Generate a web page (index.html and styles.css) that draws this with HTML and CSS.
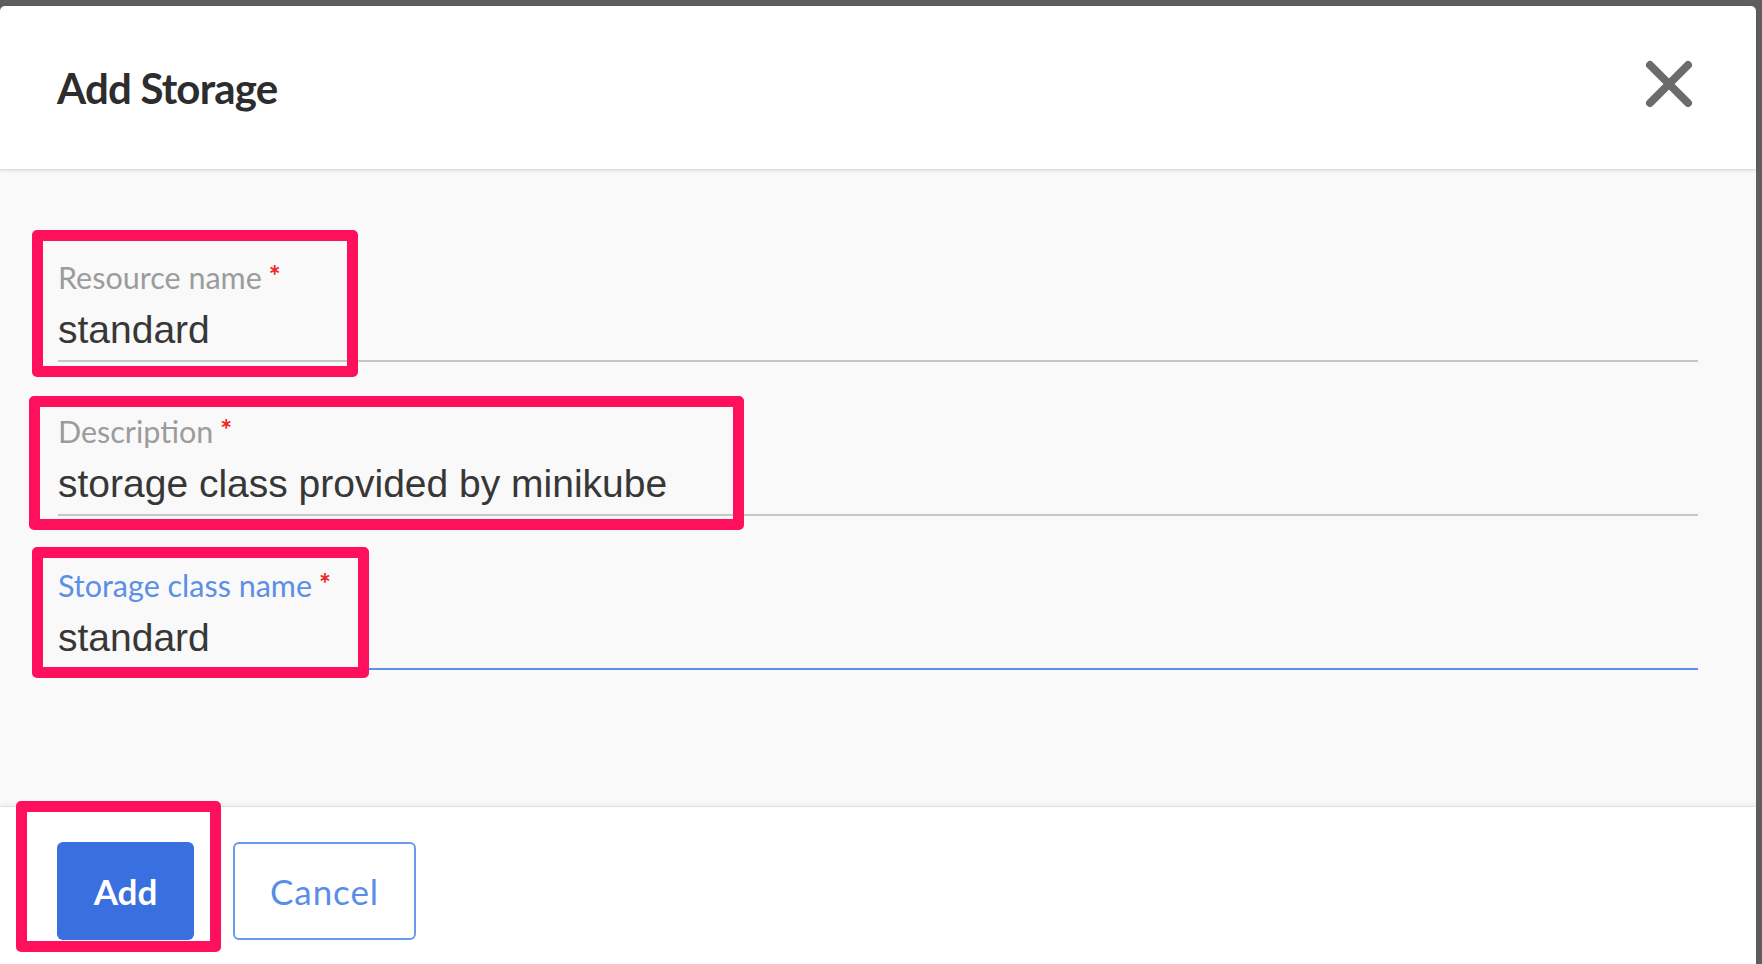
FILE: index.html
```html
<!DOCTYPE html>
<html lang="en">
<head>
<meta charset="utf-8">
<title>Add Storage</title>
<link rel="stylesheet" href="styles.css">
</head>
<body>
<div class="overlay">
  <div class="dialog">
    <header class="dlg-header">
      <h2 class="dlg-title">Add Storage</h2>
      <button class="close" aria-label="Close">
        <svg width="48" height="48" viewBox="0 0 48 48">
          <path d="M5 5 L43 43 M43 5 L5 43" stroke="#6b6b6b" stroke-width="8" stroke-linecap="round" fill="none"/>
        </svg>
      </button>
    </header>
    <div class="dlg-body">
      <div class="field">
        <label class="field-label">Resource name<span class="req">*</span></label>
        <div class="field-value">standard</div>
        <span class="mark mark-1"></span>
      </div>
      <div class="field">
        <label class="field-label">Description<span class="req">*</span></label>
        <div class="field-value">storage class provided by minikube</div>
        <span class="mark mark-2"></span>
      </div>
      <div class="field field-focused">
        <label class="field-label">Storage class name<span class="req">*</span></label>
        <div class="field-value">standard</div>
        <span class="mark mark-3"></span>
      </div>
    </div>
    <footer class="dlg-footer">
      <button class="btn btn-primary">Add<span class="mark mark-4"></span></button>
      <button class="btn btn-outline">Cancel</button>
    </footer>
  </div>
</div>
</body>
</html>
```

FILE: styles.css
```css
html, body {
  margin: 0;
  height: 100%;
}

body {
  background: #5e5e5e;
  font-family: Lato, "Open Sans", sans-serif;
  overflow: hidden;
}

.overlay {
  height: 100%;
  box-sizing: border-box;
  padding: 6px 6px 0 0;
  display: flex;
}

.dialog {
  flex: 1;
  display: flex;
  flex-direction: column;
  background: #fff;
  border-radius: 5px 5px 0 0;
}

.dlg-header {
  height: 163px;
  flex: none;
  display: flex;
  align-items: center;
  justify-content: space-between;
  padding: 0 63px 0 57px;
  border-bottom: 1px solid #dedede;
  box-shadow: 0 1px 3px rgba(0, 0, 0, 0.1);
  position: relative;
  z-index: 1;
}

.dlg-title {
  margin: 0;
  font: 700 42px/50px Lato, sans-serif;
  color: #2d2d2d;
  letter-spacing: -0.8px;
}

.close {
  width: 48px;
  height: 48px;
  padding: 0;
  border: 0;
  background: none;
  margin-bottom: 7px;
  display: block;
}

.close svg {
  display: block;
}

.dlg-body {
  flex: 1;
  background: #f9f9f9;
  padding: 89px 58px 0 58px;
  display: flex;
  flex-direction: column;
  gap: 51px;
}

.field {
  position: relative;
  padding-bottom: 8px;
  border-bottom: 2px solid #c6c6c6;
}

.field-label {
  display: block;
  height: 36px;
  font: 400 30.5px/36px Lato, sans-serif;
  color: #9c9c9c;
}

.req {
  color: #f02323;
  font-size: 28px;
  font-weight: 700;
  line-height: 0;
  margin-left: 7px;
  vertical-align: 3px;
}

.field-value {
  margin-top: 13px;
  font: 400 39px/44px "Liberation Sans", Arial, sans-serif;
  color: #373737;
}

.field-focused {
  border-bottom-color: #5c8fe6;
}

.field-focused .field-label {
  color: #5c8fe6;
}

.dlg-footer {
  flex: none;
  height: 158px;
  box-sizing: border-box;
  border-top: 1px solid #e0e0e0;
  box-shadow: 0 -2px 5px rgba(0, 0, 0, 0.05);
  background: #fff;
  padding: 35px 0 0 57px;
  display: flex;
  align-items: flex-start;
  gap: 39px;
}

.btn {
  height: 98px;
  box-sizing: border-box;
  border-radius: 6px;
  font: 400 35px/1 Lato, sans-serif;
  padding: 0;
  display: flex;
  align-items: center;
  justify-content: center;
}

.btn-primary {
  position: relative;
  width: 137px;
  border: 0;
  background: #3a6fe0;
  color: #fff;
  font-weight: 700;
}

.btn-outline {
  width: 183px;
  border: 2px solid #6a9bea;
  background: #fff;
  color: #5a8de6;
  letter-spacing: 0.9px;
}

.mark {
  position: absolute;
  box-sizing: border-box;
  border: 11px solid #ff105c;
  border-radius: 5px;
  pointer-events: none;
}

.mark-1 { left: -26px; top: -29px; width: 326px; height: 147px; }
.mark-2 { left: -29px; top: -17px; width: 715px; height: 134px; }
.mark-3 { left: -26px; top: -20px; width: 337px; height: 131px; }
.mark-4 { left: -41px; top: -41px; width: 205px; height: 151px; }
```
